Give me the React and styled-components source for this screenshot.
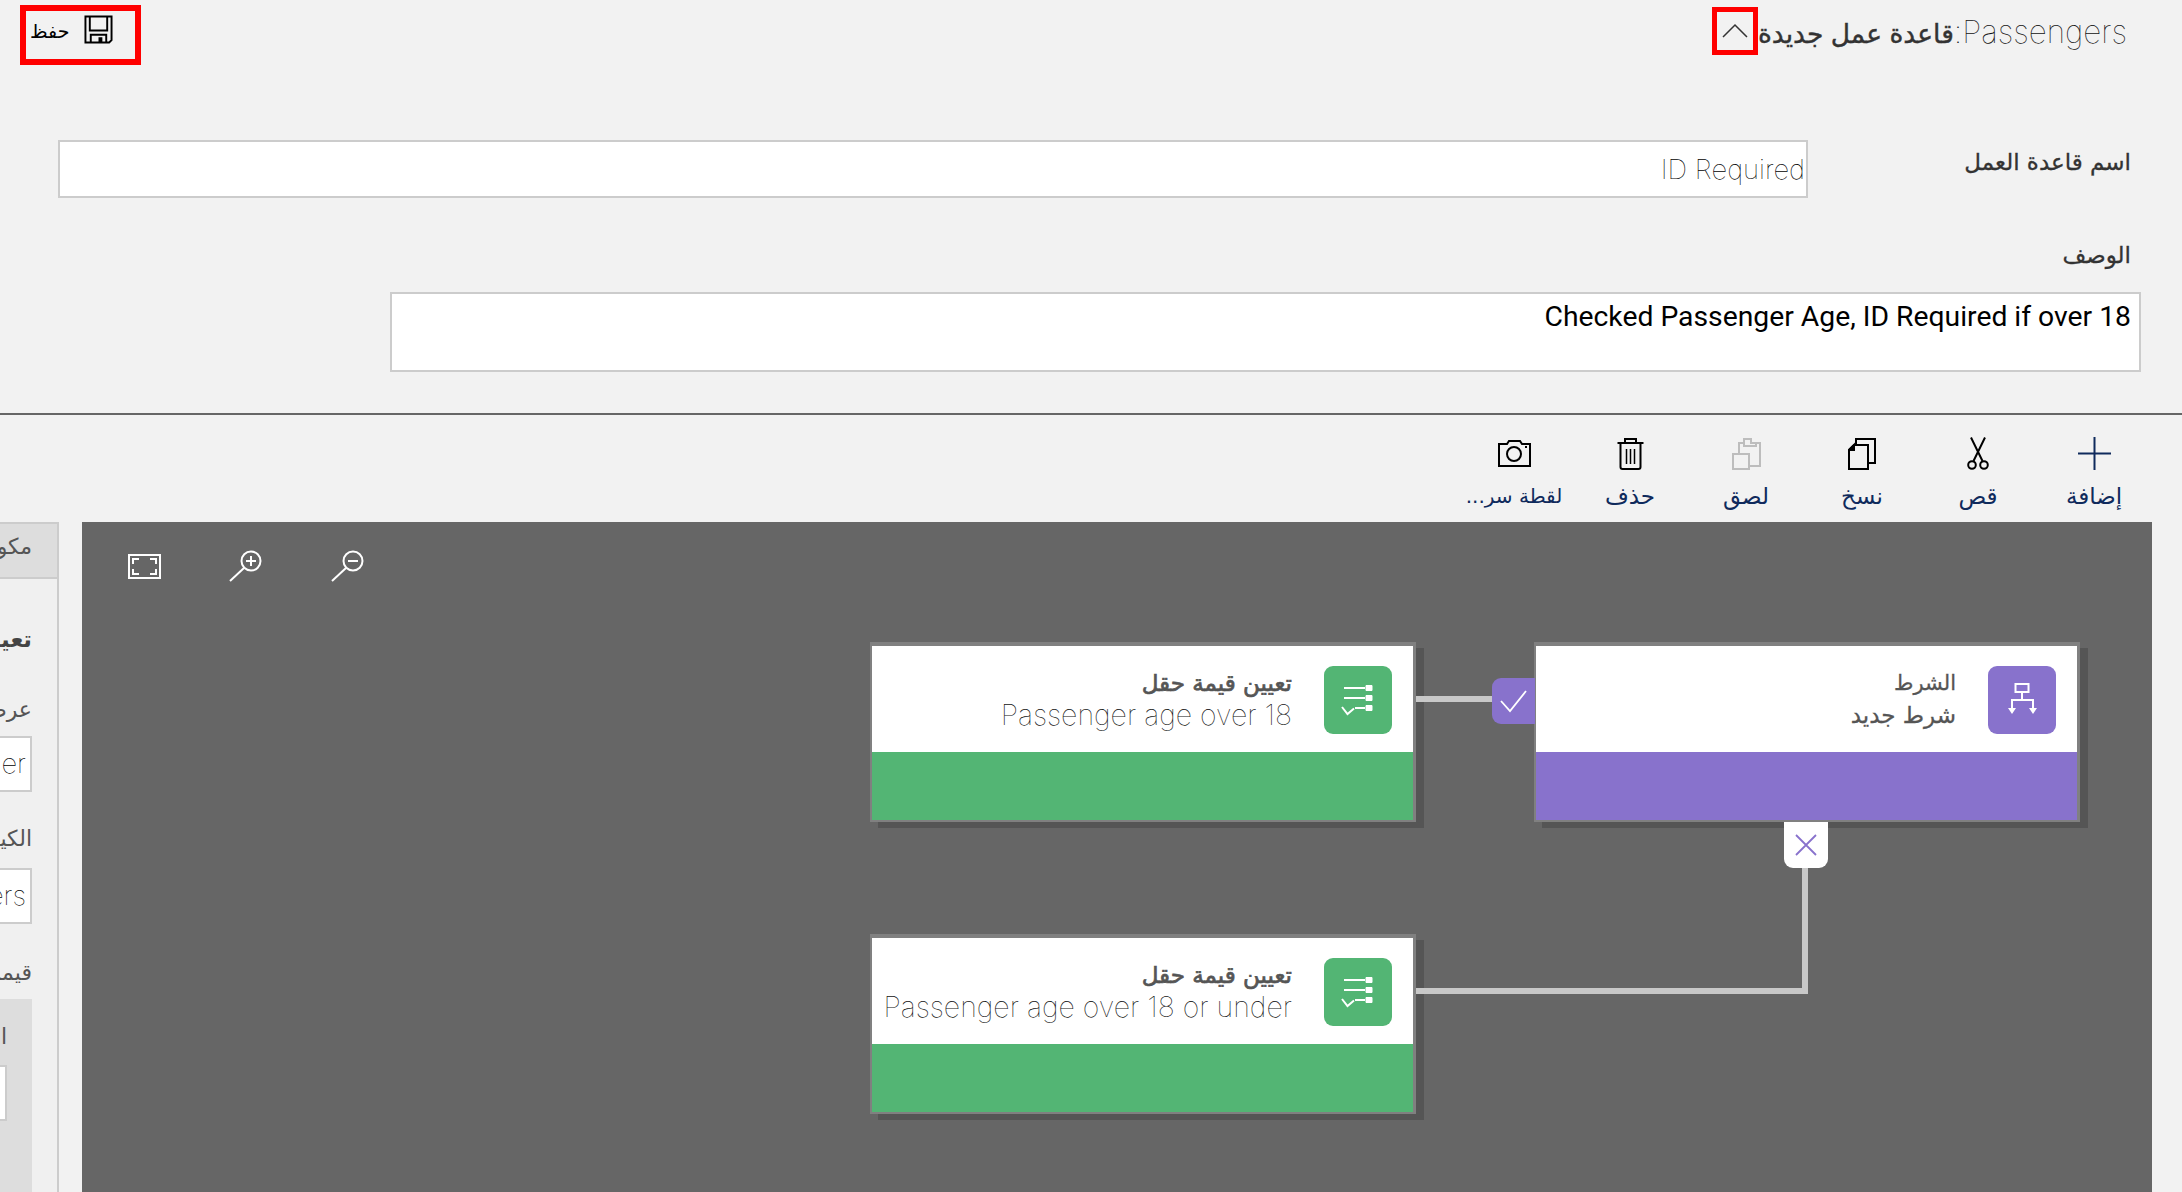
import React from "react";
import styled, { createGlobalStyle } from "styled-components";

const GlobalStyle = createGlobalStyle`
  html, body {
    margin: 0;
    padding: 0;
    height: 100%;
    overflow: hidden;
    background: #f2f2f2;
  }
  body {
    font-family: "Inter", "DejaVu Sans", sans-serif;
  }
`;

const ARABIC = `"Inter", "DejaVu Sans", sans-serif`;

const Page = styled.div`
  direction: rtl;
  width: 2182px;
  height: 1192px;
  overflow: hidden;
  background: #f2f2f2;
  display: flex;
  flex-direction: column;
`;

const Header = styled.div`
  height: 140px;
  box-sizing: border-box;
  padding: 5px 55px 0 20px;
  display: flex;
  justify-content: space-between;
  align-items: flex-start;
`;

const TitleGroup = styled.div`
  display: flex;
  align-items: flex-start;
`;

const Title = styled.div`
  font-family: ${ARABIC};
  font-size: 31.4px;
  font-weight: 100;
  line-height: 54px;
  color: #111;
  white-space: nowrap;
`;

const TitleArabic = styled.span`
  font-size: 26.5px;
  font-weight: 400;
  color: #333;
  -webkit-text-stroke: 0.4px #333;
`;

const Collapse = styled.div`
  width: 46px;
  height: 48px;
  margin-top: 2px;
  box-sizing: border-box;
  border: 5px solid #f00;
  display: flex;
  align-items: center;
  justify-content: center;
`;

const SaveBox = styled.div`
  width: 121px;
  height: 60px;
  box-sizing: border-box;
  border: 6px solid #f00;
  direction: ltr;
  display: flex;
  align-items: flex-start;
  padding: 4px 0 0 4px;
  gap: 15px;
`;

const SaveLabel = styled.span`
  font-family: "DejaVu Sans", sans-serif;
  font-size: 19px;
  line-height: 32px;
  color: #000;
`;

const NameRow = styled.div`
  display: flex;
  padding-right: 51px;
  margin-left: 58px;
`;

const FieldLabel = styled.div`
  width: ${(p) => p.$width || "auto"};
  font-family: "DejaVu Sans", sans-serif;
  font-size: 23px;
  line-height: 44px;
  color: #333;
  -webkit-text-stroke: 0.3px #333;
`;

const NameInput = styled.input`
  flex: 1;
  min-width: 0;
  height: 58px;
  box-sizing: border-box;
  border: 2px solid #ccc;
  background: #fff;
  outline: none;
  padding: 0 1px 0 0;
  direction: rtl;
  font-family: "Inter", sans-serif;
  font-size: 27.4px;
  font-weight: 100;
  color: #000;
`;

const DescLabelRow = styled.div`
  padding-right: 51px;
  margin-top: 35px;
`;

const DescBox = styled.div`
  height: 80px;
  margin: 15px 41px 0 390px;
  box-sizing: border-box;
  border: 2px solid #ccc;
  background: #fff;
  padding: 6px 8px 0 0;
  font-family: "Roboto", sans-serif;
  font-size: 28.3px;
  line-height: 34px;
  color: #000;
`;

const Divider = styled.div`
  height: 2px;
  margin-top: 41px;
  background: #666;
`;

const Toolbar = styled.div`
  height: 107px;
  padding-right: 30px;
  display: flex;
`;

const ToolItem = styled.div`
  width: 116px;
  display: flex;
  flex-direction: column;
  align-items: center;
  padding-top: 22px;
  box-sizing: border-box;
`;

const ToolIcon = styled.div`
  height: 33px;
  display: flex;
  align-items: center;
  justify-content: center;
`;

const ToolLabel = styled.div`
  margin-top: 12px;
  font-family: "DejaVu Sans", sans-serif;
  font-size: ${(p) => p.$size || 23}px;
  line-height: 28px;
  color: #0f2a5c;
  white-space: nowrap;
`;

const Workspace = styled.div`
  flex: 1;
  display: flex;
  min-height: 0;
  padding-right: 30px;
  gap: 23px;
`;

const Canvas = styled.div`
  position: relative;
  width: 2070px;
  flex: none;
  background: #666;
`;

const CanvasTools = styled.div`
  direction: ltr;
  display: flex;
  align-items: center;
  gap: 68px;
  padding: 28px 46px;
`;

const Node = styled.div`
  position: absolute;
  left: ${(p) => p.$x}px;
  top: ${(p) => p.$y}px;
  width: 546px;
  height: 180px;
  box-sizing: border-box;
  border-style: solid;
  border-color: #808080;
  border-width: 4px 3px 2px 2px;
  box-shadow: 8px 6px 0 #555;
  background: ${(p) => p.$color};
`;

const NodeHead = styled.div`
  height: 106px;
  background: #fff;
  display: flex;
  align-items: flex-start;
  padding: 20px 21px 0 0;
  box-sizing: border-box;
  gap: 32px;
`;

const NodeIcon = styled.div`
  width: 68px;
  height: 68px;
  flex: none;
  border-radius: 9px;
  background: ${(p) => p.$color};
  display: flex;
  align-items: center;
  justify-content: center;
`;

const NodeText = styled.div`
  padding-top: 1px;
  white-space: nowrap;
`;

const NodeTitle = styled.div`
  font-family: "DejaVu Sans", sans-serif;
  font-size: ${(p) => (p.$bold ? 23 : 21)}px;
  line-height: 32px;
  color: #555;
  -webkit-text-stroke: ${(p) => (p.$bold ? "0.7px" : "0.3px")} #555;
`;

const NodeSub = styled.div`
  font-family: "Inter", sans-serif;
  font-size: 28.5px;
  font-weight: 100;
  line-height: 32px;
  color: #111;
`;

const NodeSubArabic = styled(NodeSub)`
  font-family: "DejaVu Sans", sans-serif;
  font-size: 23px;
  font-weight: 400;
  color: #555;
  -webkit-text-stroke: 0.3px #555;
`;

const Wire = styled.div`
  position: absolute;
  left: ${(p) => p.$x}px;
  top: ${(p) => p.$y}px;
  width: ${(p) => p.$w}px;
  height: ${(p) => p.$h}px;
  background: #c8c8c8;
`;

const TrueTab = styled.div`
  position: absolute;
  left: 1410px;
  top: 156px;
  width: 43px;
  height: 46px;
  border-radius: 9px 0 0 9px;
  background: #8872cc;
  display: flex;
  align-items: center;
  justify-content: center;
`;

const FalseTab = styled.div`
  position: absolute;
  left: 1702px;
  top: 300px;
  width: 44px;
  height: 46px;
  border-radius: 0 0 9px 9px;
  background: #fff;
  display: flex;
  align-items: center;
  justify-content: center;
`;

const Sidebar = styled.div`
  width: 59px;
  flex: none;
  overflow: hidden;
  box-sizing: border-box;
  border-right: 2px solid #ccc;
  background: #f0f0f0;
`;

const SideInner = styled.div`
  width: 300px;
  box-sizing: border-box;
`;

const SideTab = styled.div`
  height: 57px;
  box-sizing: border-box;
  padding-right: 25px;
  background: #ddd;
  border-bottom: 2px solid #ccc;
  border-top: 2px solid #ccc;
  font-family: "DejaVu Sans", sans-serif;
  font-size: 22px;
  line-height: 46px;
  color: #555;
  white-space: nowrap;
`;

const SideBody = styled.div`
  padding-right: 25px;
  padding-top: 42px;
`;

const SideHeading = styled.div`
  font-family: "DejaVu Sans", sans-serif;
  font-size: 23px;
  font-weight: 700;
  line-height: 36px;
  color: #444;
  white-space: nowrap;
`;

const SideLabel = styled.div`
  margin-top: ${(p) => p.$top}px;
  font-family: "DejaVu Sans", sans-serif;
  font-size: 22px;
  line-height: 32px;
  color: #555;
  white-space: nowrap;
`;

const SideInput = styled.div`
  margin-top: ${(p) => p.$top}px;
  height: 56px;
  box-sizing: border-box;
  border: 2px solid #ccc;
  background: #fff;
  padding: 0 4px 0 0;
  font-family: "Inter", sans-serif;
  font-size: 27.4px;
  font-weight: 100;
  line-height: 50px;
  color: #000;
  white-space: nowrap;
`;

const ValueGroup = styled.div`
  margin-top: 10px;
  height: 240px;
  background: #ddd;
  padding: 22px 25px 0 0;
  box-sizing: border-box;
`;

const ValueInput = styled.div`
  margin-top: 12px;
  height: 56px;
  box-sizing: border-box;
  border: 2px solid #ccc;
  background: #fff;
`;

const SaveIcon = () => (
  <svg width="29" height="29" viewBox="0 0 30 30" fill="none" stroke="#000" strokeWidth="2">
    <path d="M1.5 1.500H28.500V26L26 28.500H1.500Z" />
    <path d="M6 1.500V16H24V1.500" />
    <path d="M7 28.500V20.500H23V28.500" />
    <rect x="15" y="23" width="4" height="5" fill="#000" stroke="none" />
  </svg>
);

const ChevronIcon = () => (
  <svg width="26" height="16" viewBox="0 0 26 16" fill="none" stroke="#333" strokeWidth="1.500">
    <path d="M1 14L13 2L25 14" />
  </svg>
);

const PlusIcon = () => (
  <svg width="33" height="33" viewBox="0 0 33 33" fill="none" stroke="#0f2a5c" strokeWidth="2">
    <path d="M16.500 0V33M0 16.500H33" />
  </svg>
);

const CutIcon = () => (
  <svg width="22" height="33" viewBox="0 0 22 33" fill="none" stroke="#000" strokeWidth="2">
    <path d="M4 0.500L15.500 24M18 0.500L6.500 24" />
    <circle cx="5" cy="28" r="3.800" />
    <circle cx="17" cy="28" r="3.800" />
  </svg>
);

const CopyIcon = () => (
  <svg width="28" height="32" viewBox="0 0 28 32" fill="none" stroke="#000" strokeWidth="2">
    <path d="M8 7V1H27V25H20" />
    <path d="M6 7H20V31H1V12Z" />
    <path d="M1 12L6 7V12Z" fill="#000" />
  </svg>
);

const PasteIcon = () => (
  <svg width="29" height="32" viewBox="0 0 29 32" fill="none" stroke="#bdbdbd" strokeWidth="2">
    <path d="M7 16V5H12V1H19V5H28V28H17" />
    <path d="M12 5V8H24V5" />
    <rect x="1" y="16" width="16" height="15" />
  </svg>
);

const TrashIcon = () => (
  <svg width="27" height="32" viewBox="0 0 27 32" fill="none" stroke="#000" strokeWidth="2">
    <path d="M0.500 5H26.500" />
    <path d="M8 5V1H19V5" />
    <path d="M3.500 5V29C3.500 30.500 4.500 31 5.500 31H21.500C22.500 31 23.500 30.500 23.500 29V5" />
    <path d="M9.500 11V26M13.500 11V26M17.500 11V26" strokeWidth="1.500" />
  </svg>
);

const CameraIcon = () => (
  <svg width="33" height="27" viewBox="0 0 33 27" fill="none" stroke="#000" strokeWidth="2">
    <path d="M1 4H9L11 1H22L24 4H32V26H1Z" />
    <circle cx="16" cy="14" r="7" />
    <rect x="27" y="6" width="2" height="2" fill="#000" stroke="none" />
  </svg>
);

const FitIcon = () => (
  <svg width="33" height="25" viewBox="0 0 33 25" fill="none" stroke="#fff">
    <rect x="1" y="1" width="31" height="23" strokeWidth="2" />
    <path d="M5 10V5H11M22 5H28V10M28 15V20H22M11 20H5V15" strokeWidth="2" />
  </svg>
);

const ZoomInIcon = () => (
  <svg width="34" height="32" viewBox="0 0 34 32" fill="none" stroke="#fff" strokeWidth="2">
    <circle cx="22" cy="11" r="9.500" />
    <path d="M15 18L1 31" />
    <path d="M17 11H27M22 6V16" />
  </svg>
);

const ZoomOutIcon = () => (
  <svg width="34" height="32" viewBox="0 0 34 32" fill="none" stroke="#fff" strokeWidth="2">
    <circle cx="22" cy="11" r="9.500" />
    <path d="M15 18L1 31" />
    <path d="M17 11H27" />
  </svg>
);

const AssignIcon = () => (
  <svg width="34" height="34" viewBox="0 0 34 34" fill="none" stroke="#fff" strokeWidth="2">
    <path d="M3 5H24M3 15H24M14 25H24" />
    <path d="M1 24L6.500 31L13 25.500" />
    <path d="M25 2.500H31V7.500H25ZM25 12.500H31V17.500H25ZM25 22.500H31V27.500H25Z" fill="#fff" strokeWidth="1" />
  </svg>
);

const BranchIcon = () => (
  <svg width="34" height="34" viewBox="0 0 34 34" fill="none" stroke="#fff" strokeWidth="2">
    <rect x="10.500" y="1" width="13" height="8" />
    <path d="M17 9V17M7 28V17H28V28" />
    <path d="M3 25H11L7 31ZM24 25H32L28 31Z" fill="#fff" stroke="none" />
  </svg>
);

const CheckIcon = () => (
  <svg width="28" height="24" viewBox="0 0 28 24" fill="none" stroke="#fff" strokeWidth="1.800">
    <path d="M1 12L10 22L26 2" />
  </svg>
);

const CrossIcon = () => (
  <svg width="22" height="22" viewBox="0 0 22 22" fill="none" stroke="#8872cc" strokeWidth="1.800">
    <path d="M1 1L21 21M21 1L1 21" />
  </svg>
);

const tools = [
  { label: "إضافة", icon: <PlusIcon /> },
  { label: "قص", icon: <CutIcon /> },
  { label: "نسخ", icon: <CopyIcon /> },
  { label: "لصق", icon: <PasteIcon /> },
  { label: "حذف", icon: <TrashIcon /> },
  { label: "لقطة سر...", icon: <CameraIcon />, size: 20 },
];

const GREEN = "#53b574";
const PURPLE = "#8872cc";

const App = () => {
  return (
    <>
      <GlobalStyle />
      <Page>
        <Header>
          <TitleGroup>
            <Title>
              Passengers:<TitleArabic>قاعدة عمل جديدة</TitleArabic>
            </Title>
            <Collapse>
              <ChevronIcon />
            </Collapse>
          </TitleGroup>
          <SaveBox>
            <SaveLabel>حفظ</SaveLabel>
            <SaveIcon />
          </SaveBox>
        </Header>

        <NameRow>
          <FieldLabel $width="323px">اسم قاعدة العمل</FieldLabel>
          <NameInput readOnly value="ID Required" />
        </NameRow>

        <DescLabelRow>
          <FieldLabel>الوصف</FieldLabel>
        </DescLabelRow>
        <DescBox>Checked Passenger Age, ID Required if over 18</DescBox>

        <Divider />

        <Toolbar>
          {tools.map((tool) => (
            <ToolItem key={tool.label}>
              <ToolIcon>{tool.icon}</ToolIcon>
              <ToolLabel $size={tool.size}>{tool.label}</ToolLabel>
            </ToolItem>
          ))}
        </Toolbar>

        <Workspace>
          <Canvas>
            <CanvasTools>
              <FitIcon />
              <ZoomInIcon />
              <ZoomOutIcon />
            </CanvasTools>

            <Node $x={788} $y={120} $color={GREEN}>
              <NodeHead>
                <NodeIcon $color={GREEN}>
                  <AssignIcon />
                </NodeIcon>
                <NodeText>
                  <NodeTitle $bold>تعيين قيمة حقل</NodeTitle>
                  <NodeSub>Passenger age over 18</NodeSub>
                </NodeText>
              </NodeHead>
            </Node>

            <Node $x={1452} $y={120} $color={PURPLE}>
              <NodeHead>
                <NodeIcon $color={PURPLE}>
                  <BranchIcon />
                </NodeIcon>
                <NodeText>
                  <NodeTitle>الشرط</NodeTitle>
                  <NodeSubArabic>شرط جديد</NodeSubArabic>
                </NodeText>
              </NodeHead>
            </Node>

            <Node $x={788} $y={412} $color={GREEN}>
              <NodeHead>
                <NodeIcon $color={GREEN}>
                  <AssignIcon />
                </NodeIcon>
                <NodeText>
                  <NodeTitle $bold>تعيين قيمة حقل</NodeTitle>
                  <NodeSub>Passenger age over 18 or under</NodeSub>
                </NodeText>
              </NodeHead>
            </Node>

            <Wire $x={1334} $y={174} $w={80} $h={6} />
            <Wire $x={1334} $y={466} $w={392} $h={6} />
            <Wire $x={1720} $y={346} $w={6} $h={126} />

            <TrueTab>
              <CheckIcon />
            </TrueTab>
            <FalseTab>
              <CrossIcon />
            </FalseTab>
          </Canvas>

          <Sidebar>
            <SideInner>
              <SideTab>مكونات</SideTab>
              <SideBody>
                <SideHeading>تعيين</SideHeading>
                <SideLabel $top={37}>عرض الاسم</SideLabel>
                <SideInput $top={10}>Passenger</SideInput>
                <SideLabel $top={31}>الكيان</SideLabel>
                <SideInput $top={13}>Passengers</SideInput>
                <SideLabel $top={33}>قيمة</SideLabel>
                <ValueGroup>
                  <SideLabel $top={0}>ا</SideLabel>
                  <ValueInput />
                </ValueGroup>
              </SideBody>
            </SideInner>
          </Sidebar>
        </Workspace>
      </Page>
    </>
  );
};

export default App;
